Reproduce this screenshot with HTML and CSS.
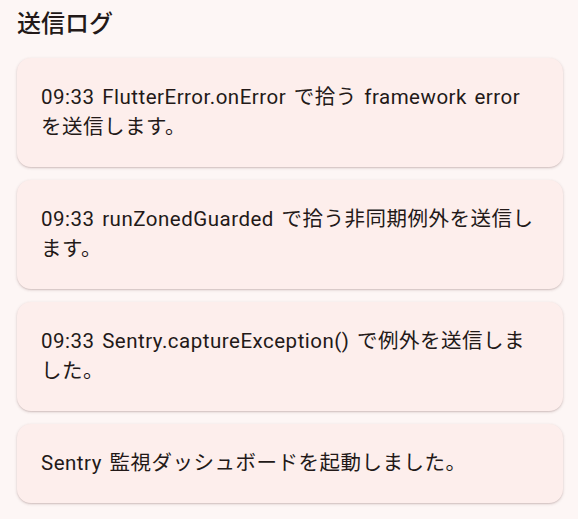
FILE: index.html
```html
<!DOCTYPE html>
<html lang="ja">
<head>
<meta charset="utf-8">
<title>送信ログ</title>
<link rel="stylesheet" href="styles.css">
</head>
<body>
<main class="page">
  <h1 class="title">送信ログ</h1>
  <ul class="log-list">
    <li class="log-card">09:33 FlutterError.onError で拾う framework error を送信します。</li>
    <li class="log-card">09:33 runZonedGuarded で拾う非同期例外を送信します。</li>
    <li class="log-card">09:33 Sentry.captureException() で例外を送信しました。</li>
    <li class="log-card">Sentry 監視ダッシュボードを起動しました。</li>
  </ul>
</main>
</body>
</html>
```
FILE: styles.css
```css
html, body {
  margin: 0;
  padding: 0;
  background: #fdf6f5;
}
body {
  font-family: Roboto, "Noto Sans CJK JP", sans-serif;
  color: #231918;
}
.page {
  padding: 8px 15px 16px 17px;
}
.title {
  margin: 0;
  font-size: 24px;
  font-weight: 500;
  line-height: 32px;
  letter-spacing: 0;
}
.log-list {
  list-style: none;
  margin: 18px 0 0 0;
  padding: 0;
  display: flex;
  flex-direction: column;
  gap: 13px;
}
.log-card {
  background: #fdeeec;
  border-radius: 14px;
  padding: 24px 22px 25px 24px;
  font-size: 20.5px;
  line-height: 30px;
  letter-spacing: 0.5px;
  word-spacing: 2px;
  box-shadow: 0 1px 3px rgba(80, 40, 40, 0.22), 0 1px 1px rgba(80, 40, 40, 0.08);
}
```
